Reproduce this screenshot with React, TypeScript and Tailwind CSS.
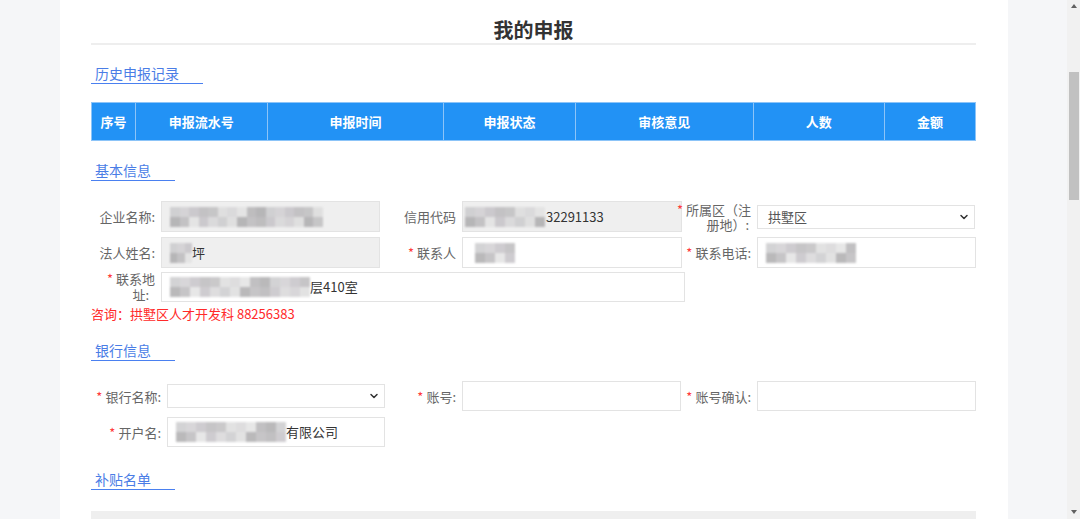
import { ChevronDown } from "lucide-react";
import type { ReactNode } from "react";

const FONT = { fontFamily: '"Microsoft YaHei", "Noto Sans CJK SC", "Noto Sans", sans-serif' };

const GRAYS = ["#c9c9cb", "#b9b7ba", "#d6d5d7", "#a9a8aa", "#c3c0c5", "#dcdcdc", "#b2b1b3", "#cfcdd0", "#bdbcbe", "#e2e2e2"];

function Mosaic({ width, rows = 2 }: { width: number; rows?: number }) {
  const cols = Math.ceil(width / 10);
  return (
    <div className="flex shrink-0 flex-col blur-[0.8px] opacity-80" style={{ width }}>
      {Array.from({ length: rows }).map((_, r) => (
        <div key={r} className="flex h-[10px]">
          {Array.from({ length: cols }).map((_, c) => (
            <div
              key={c}
              className="h-full w-[10px]"
              style={{ background: GRAYS[(c * 7 + r * 3 + (c % 3) * r) % GRAYS.length] }}
            />
          ))}
        </div>
      ))}
    </div>
  );
}

function Star() {
  return <span className="mr-[3px] text-[#ff3b3b]">*</span>;
}

function Label({ w, children }: { w: string; children: ReactNode }) {
  return (
    <div className={`${w} flex shrink-0 flex-col items-end whitespace-nowrap pr-[6px] text-[13px] leading-[15px] text-[#666]`}>
      {children}
    </div>
  );
}

function Box({ w, gray, h = "h-[31px]", children }: { w: string; gray?: boolean; h?: string; children?: ReactNode }) {
  return (
    <div
      className={`${w} ${h} flex shrink-0 items-center overflow-hidden border border-[#e3e3e3] px-[8px] text-[13px] text-[#333] ${
        gray ? "bg-[#efefef]" : "bg-white"
      }`}
    >
      {children}
    </div>
  );
}

function SelectBox({ w, h, value }: { w: string; h: string; value?: string }) {
  return (
    <div className={`${w} ${h} relative flex shrink-0 items-center border border-[#e3e3e3] bg-white pl-[10px] text-[13px] text-[#555]`}>
      {value}
      <ChevronDown size={12} strokeWidth={3} className="absolute right-[4px] top-1/2 -translate-y-1/2 text-[#333]" />
    </div>
  );
}

function Heading({ children }: { children: ReactNode }) {
  return (
    <div className="w-fit whitespace-nowrap border-b border-[#4a80f0] pl-[4px] pr-[24px] text-[14px] leading-[20px] text-[#4a7de6]">
      {children}
    </div>
  );
}

const COLS = [
  { name: "序号", w: "w-[43px]" },
  { name: "申报流水号", w: "w-[132px]" },
  { name: "申报时间", w: "w-[177px]" },
  { name: "申报状态", w: "w-[132px]" },
  { name: "审核意见", w: "w-[178px]" },
  { name: "人数", w: "w-[132px]" },
  { name: "金额", w: "w-[91px]" },
];

export default function App() {
  return (
    <div className="flex h-[519px] w-[1080px] overflow-hidden bg-[#f5f6f8]" style={FONT}>
      <div className="w-[60px] shrink-0" />

      {/* page panel */}
      <div className="w-[948px] shrink-0 bg-white pl-[31px] pr-[32px]">
        <div className="mt-[16px] h-[29px] border-b-2 border-[#eeeeee] text-center text-[20px] font-bold leading-[28px] text-[#333]">
          我的申报
        </div>

        <div className="mt-[18px]">
          <Heading>历史申报记录</Heading>
        </div>

        {/* history table header */}
        <div className="mt-[18px] flex h-[39px] border border-[#8cc4f8] bg-[#2292f5]">
          {COLS.map((c, i) => (
            <div
              key={c.name}
              className={`${c.w} flex items-center justify-center text-[13px] font-bold text-white ${
                i > 0 ? "border-l border-[#8cc4f8]" : ""
              }`}
            >
              {c.name}
            </div>
          ))}
        </div>

        <div className="mt-[19px]">
          <Heading>基本信息</Heading>
        </div>

        {/* basic info */}
        <div className="mt-[20px] flex h-[31px] items-center">
          <Label w="w-[70px]">企业名称:</Label>
          <Box w="w-[219px]" gray>
            <Mosaic width={153} />
          </Box>
          <Label w="w-[82px]">信用代码</Label>
          <Box w="w-[220px]" gray>
            <div className="-ml-[6px] flex items-center">
              <Mosaic width={80} />
              <span className="ml-[1px]">32291133</span>
            </div>
          </Box>
          <Label w="w-[75px]">
            <span>
              <Star />所属区（注
            </span>
            <span className="pr-[2px]">册地）:</span>
          </Label>
          <div className="flex h-[31px] w-[219px] shrink-0 items-center">
            <SelectBox w="w-[218px]" h="h-[24px]" value="拱墅区" />
          </div>
        </div>

        <div className="mt-[5px] flex h-[31px] items-center">
          <Label w="w-[70px]">法人姓名:</Label>
          <Box w="w-[219px]" gray>
            <Mosaic width={22} />
            <span>坪</span>
          </Box>
          <Label w="w-[82px]">
            <span>
              <Star />联系人
            </span>
          </Label>
          <Box w="w-[220px]">
            <div className="ml-[4px]">
              <Mosaic width={40} />
            </div>
          </Box>
          <Label w="w-[75px]">
            <span>
              <Star />联系电话:
            </span>
          </Label>
          <Box w="w-[219px]">
            <Mosaic width={90} />
          </Box>
        </div>

        <div className="mt-[4px] flex h-[30px] items-center">
          <Label w="w-[70px]">
            <span className="leading-[16px]">
              <Star />联系地
            </span>
            <span className="pr-[6px] leading-[16px]">址:</span>
          </Label>
          <Box w="w-[524px]" h="h-[30px]">
            <Mosaic width={140} />
            <span>层410室</span>
          </Box>
        </div>

        <div className="mt-[4px] text-[13px] leading-[16px] text-[#ff2a2a]">咨询：拱墅区人才开发科 88256383</div>

        <div className="mt-[18px]">
          <Heading>银行信息</Heading>
        </div>

        {/* bank info */}
        <div className="mt-[20px] flex h-[30px] items-center">
          <Label w="w-[76px]">
            <span>
              <Star />银行名称:
            </span>
          </Label>
          <SelectBox w="w-[218px]" h="h-[24px]" />
          <Label w="w-[77px]">
            <span>
              <Star />账号:
            </span>
          </Label>
          <Box w="w-[219px]" h="h-[30px]" />
          <Label w="w-[76px]">
            <span>
              <Star />账号确认:
            </span>
          </Label>
          <Box w="w-[219px]" h="h-[30px]" />
        </div>

        <div className="mt-[6px] flex h-[30px] items-center">
          <Label w="w-[76px]">
            <span>
              <Star />开户名:
            </span>
          </Label>
          <Box w="w-[218px]" h="h-[30px]">
            <Mosaic width={110} />
            <span>有限公司</span>
          </Box>
        </div>

        <div className="mt-[22px]">
          <Heading>补贴名单</Heading>
        </div>

        <div className="mt-[21px] h-[40px] bg-[#efefef]" />
      </div>

      <div className="w-[59px] shrink-0" />

      {/* scrollbar */}
      <div className="flex w-[13px] shrink-0 flex-col items-center bg-[#f1f1f1]">
        <div className="mt-[4px] h-0 w-0 border-x-[3px] border-b-[4px] border-x-transparent border-b-[#606060]" />
        <div className="mt-[64px] h-[128px] w-[10px] bg-[#c1c1c1]" />
        <div className="flex-1" />
        <div className="mb-[5px] h-0 w-0 border-x-[3px] border-t-[4px] border-x-transparent border-t-[#606060]" />
      </div>
    </div>
  );
}
